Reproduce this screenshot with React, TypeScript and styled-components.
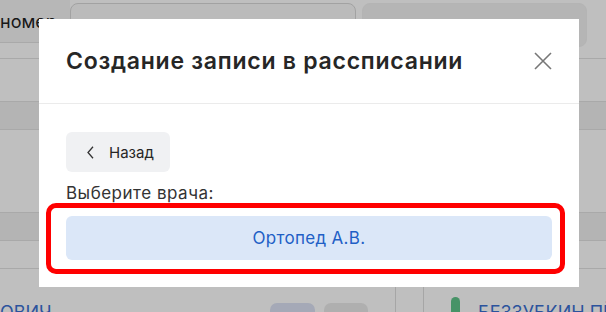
import styled, { createGlobalStyle } from "styled-components";

const GlobalStyle = createGlobalStyle`
  html, body {
    margin: 0;
    padding: 0;
    background: #ffffff;
    font-family: Inter, Roboto, "Noto Sans", Arial, sans-serif;
  }
  * { box-sizing: border-box; }
`;

const Page = styled.div`
  width: 606px;
  height: 312px;
  overflow: hidden;
  background: #ffffff;
`;

const FilterBar = styled.div`
  display: flex;
  align-items: flex-start;
  height: 59px;
  border-bottom: 1px solid #e2e2e2;
`;

const FilterLabel = styled.div`
  flex-shrink: 0;
  width: 70px;
  height: 43px;
  display: flex;
  align-items: center;
  background: #f4f4f4;
  border-bottom: 1px solid #e2e2e2;
  font-size: 18px;
  color: #222;
  white-space: nowrap;
  overflow: hidden;
`;

const FilterInput = styled.div<{ $width: number; $filled?: boolean }>`
  flex-shrink: 0;
  width: ${({ $width }) => $width}px;
  height: 44px;
  margin: 3px 6px 0 0;
  border-radius: 8px;
  border: 1px solid ${({ $filled }) => ($filled ? "#f0f0f0" : "#d8d8d8")};
  background: ${({ $filled }) => ($filled ? "#f2f2f2" : "#fafafa")};
  padding: 12px 17px;
  font-size: 16px;
  color: #888;
`;

const Row = styled.div<{ $height: number; $shade?: boolean }>`
  height: ${({ $height }) => $height}px;
  background: ${({ $shade }) => ($shade ? "#f0f0f0" : "#ffffff")};
  border-bottom: 1px solid #e2e2e2;
`;

const PersonRow = styled.div`
  display: flex;
  align-items: flex-start;
  height: 44px;
  padding-top: 28px;
  & > * {
    flex-shrink: 0;
  }
`;

const NameCell = styled.div`
  width: 270px;
  margin-top: 5px;
  font-size: 18px;
  color: #3a6fd2;
  white-space: nowrap;
`;

const Chip = styled.div<{ $tone: string; $width: number }>`
  width: ${({ $width }) => $width}px;
  height: 24px;
  margin-top: 6px;
  margin-right: 9px;
  border-radius: 7px;
  background: ${({ $tone }) => $tone};
`;

const Divider = styled.div<{ $gap: number }>`
  width: 1px;
  align-self: stretch;
  margin: -28px 0 0 ${({ $gap }) => $gap}px;
  background: #dedede;
`;

const StatusBar = styled.div`
  width: 9px;
  height: 24px;
  border-radius: 5px;
  background: #5fc48a;
  margin: 0 18px 0 27px;
`;

const PatientName = styled.div`
  margin-top: 5px;
  font-size: 18px;
  color: #3a6fd2;
  white-space: nowrap;
`;

const Overlay = styled.div`
  position: fixed;
  inset: 0;
  background: rgba(0, 0, 0, 0.25);
`;

const Modal = styled.div`
  position: relative;
  width: 540px;
  margin: 19px 0 0 39px;
  background: #ffffff;
`;

const Header = styled.div`
  height: 85px;
  padding: 0 27px;
  display: flex;
  align-items: center;
  justify-content: space-between;
  border-bottom: 1px solid #ebebeb;
`;

const Title = styled.h2`
  margin: 0;
  font-size: 23px;
  font-weight: 600;
  letter-spacing: 0.75px;
  color: #262626;
`;

const CloseButton = styled.button`
  width: 24px;
  height: 24px;
  padding: 0;
  margin-right: -3px;
  border: none;
  background: none;
  display: flex;
  align-items: center;
  justify-content: center;
`;

const Body = styled.div`
  position: relative;
  padding: 28px 27px 27px;
`;

const BackButton = styled.button`
  height: 40px;
  padding: 0 16px 0 21px;
  display: flex;
  align-items: center;
  gap: 15px;
  border: none;
  border-radius: 6px;
  background: #f0f1f3;
  font-family: inherit;
  font-size: 15px;
  color: #262626;
`;

const Label = styled.div`
  margin: 11px 0 13px;
  font-size: 17px;
  line-height: 20px;
  letter-spacing: 0.5px;
  color: #333333;
`;

const DoctorButton = styled.button`
  width: 100%;
  height: 44px;
  border: none;
  border-radius: 6px;
  background: #dbe7f8;
  font-family: inherit;
  font-size: 17px;
  letter-spacing: 0.3px;
  color: #1f5fc6;
`;

const Highlight = styled.div`
  position: absolute;
  left: 7px;
  top: 99px;
  width: 519px;
  height: 71px;
  border: 5px solid #ff0000;
  border-radius: 10px;
  pointer-events: none;
`;

export default function App() {
  return (
    <>
      <GlobalStyle />
      <Page>
        <FilterBar>
          <FilterLabel>номер</FilterLabel>
          <FilterInput $width={286}>В</FilterInput>
          <FilterInput $width={225} $filled>
            П
          </FilterInput>
        </FilterBar>
        <Row $height={43} />
        <Row $height={28} $shade />
        <Row $height={83} />
        <Row $height={28} $shade />
        <Row $height={28} />
        <PersonRow>
          <NameCell>ОВИЧ</NameCell>
          <Chip $tone="#dce2f4" $width={45} />
          <Chip $tone="#eaeaea" $width={44} />
          <Divider $gap={18} />
          <Divider $gap={27} />
          <StatusBar />
          <PatientName>БЕЗЗУБКИН ПЁТР</PatientName>
        </PersonRow>
      </Page>
      <Overlay>
        <Modal>
          <Header>
            <Title>Создание записи в рассписании</Title>
            <CloseButton aria-label="Закрыть">
              <svg width="18" height="18" viewBox="0 0 18 18">
                <path d="M1 1 L17 17 M17 1 L1 17" stroke="#777" strokeWidth="1.6" fill="none" />
              </svg>
            </CloseButton>
          </Header>
          <Body>
            <BackButton>
              <svg width="7" height="13" viewBox="0 0 7 13">
                <path d="M6 0.8 L1 6.5 L6 12.2" stroke="#333" strokeWidth="1.3" fill="none" />
              </svg>
              Назад
            </BackButton>
            <Label>Выберите врача:</Label>
            <DoctorButton>Ортопед А.В.</DoctorButton>
            <Highlight />
          </Body>
        </Modal>
      </Overlay>
    </>
  );
}
